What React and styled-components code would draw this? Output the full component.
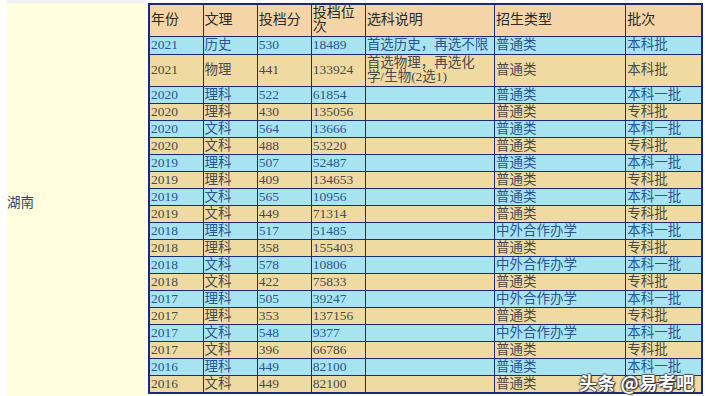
import React from 'react';
import styled, { createGlobalStyle } from 'styled-components';

const GlobalStyle = createGlobalStyle`
  html, body {
    margin: 0;
    padding: 0;
    background: #ffffff;
    overflow: hidden;
  }
  body {
    font-family: "Liberation Serif", "Noto Sans CJK SC", serif;
  }
`;

const Page = styled.div`
  display: flex;
  width: 705px;
  height: 396px;
  padding-left: 7px;
  box-sizing: border-box;
`;

const RegionCell = styled.div`
  width: 138px;
  flex: none;
  display: flex;
  align-items: center;
  background: #fffedf;
  border-top: 3px solid #eef0f8;
  box-sizing: border-box;
  color: #2c4a6e;
  font-family: "Noto Sans CJK SC", sans-serif;
  font-size: 13.5px;
  padding-top: 2px;
`;

const TableWrap = styled.div`
  position: relative;
  margin-left: 3px;
  padding-top: 3px;
`;

const Table = styled.table`
  border-collapse: collapse;
  table-layout: fixed;
  width: 555px;
  border: 2px solid #1c2a7c;
  font-size: 13.5px;
`;

const Row = styled.tr`
  height: ${p => p.$h}px;
  background: ${p => (p.$head ? '#f5d4a7' : p.$blue ? '#a8e4ef' : '#efdba2')};
  color: ${p => (p.$head ? '#2a2a2a' : p.$blue ? '#2b5592' : '#4a4a4a')};
`;

const Cell = styled.td`
  border: 1px solid #1c2a7c;
  padding: 0 0 0 1px;
  line-height: ${p => (p.$tight ? '14px' : '16px')};
  vertical-align: middle;
  overflow: hidden;
  white-space: ${p => (p.$wrap ? 'pre-line' : 'nowrap')};
  word-break: break-all;
`;

const HeadCell = styled(Cell)`
  line-height: 14px;
  font-size: 14px;
`;

const Watermark = styled.div`
  position: absolute;
  left: 431px;
  top: 369px;
  font-family: "Noto Sans CJK SC", sans-serif;
  font-size: 18px;
  font-weight: bold;
  color: #ffffff;
  letter-spacing: 0.5px;
  text-shadow: 1px 1px 1px #333, -1px 0 1px #555, 0 -1px 1px #555, 1px 0 1px #444;
`;

const widths = [54, 54, 54, 54, 129, 131, 76];

const header = ['年份', '文理', '投档分', '投档位次', '选科说明', '招生类型', '批次'];

const rows = [
  ['2021', '历史', '530', '18489', '首选历史，再选不限', '普通类', '本科批'],
  ['2021', '物理', '441', '133924', '首选物理，再选化\n学/生物(2选1)', '普通类', '本科批'],
  ['2020', '理科', '522', '61854', '', '普通类', '本科一批'],
  ['2020', '理科', '430', '135056', '', '普通类', '专科批'],
  ['2020', '文科', '564', '13666', '', '普通类', '本科一批'],
  ['2020', '文科', '488', '53220', '', '普通类', '专科批'],
  ['2019', '理科', '507', '52487', '', '普通类', '本科一批'],
  ['2019', '理科', '409', '134653', '', '普通类', '专科批'],
  ['2019', '文科', '565', '10956', '', '普通类', '本科一批'],
  ['2019', '文科', '449', '71314', '', '普通类', '专科批'],
  ['2018', '理科', '517', '51485', '', '中外合作办学', '本科一批'],
  ['2018', '理科', '358', '155403', '', '普通类', '专科批'],
  ['2018', '文科', '578', '10806', '', '中外合作办学', '本科一批'],
  ['2018', '文科', '422', '75833', '', '普通类', '专科批'],
  ['2017', '理科', '505', '39247', '', '中外合作办学', '本科一批'],
  ['2017', '理科', '353', '137156', '', '普通类', '专科批'],
  ['2017', '文科', '548', '9377', '', '中外合作办学', '本科一批'],
  ['2017', '文科', '396', '66786', '', '普通类', '专科批'],
  ['2016', '理科', '449', '82100', '', '普通类', '本科一批'],
  ['2016', '文科', '449', '82100', '', '普通类', '本科一批'],
];

function rowHeight(i) {
  if (i === 0) return 18;
  if (i === 1) return 32;
  return 17;
}

export default function App() {
  return (
    <>
      <GlobalStyle />
      <Page>
        <RegionCell>湖南</RegionCell>
        <TableWrap>
          <Table>
            <colgroup>
              {widths.map((w, i) => (
                <col key={i} style={{ width: w }} />
              ))}
            </colgroup>
            <tbody>
              <Row $head $h={32}>
                {header.map((h, i) => (
                  <HeadCell key={i} $wrap>{h}</HeadCell>
                ))}
              </Row>
              {rows.map((r, i) => (
                <Row key={i} $blue={i % 2 === 0} $h={rowHeight(i)}>
                  {r.map((c, j) => (
                    <Cell key={j} $wrap={j === 4} $tight={i === 1}>{c}</Cell>
                  ))}
                </Row>
              ))}
            </tbody>
          </Table>
          <Watermark>头条 @易考吧</Watermark>
        </TableWrap>
      </Page>
    </>
  );
}
